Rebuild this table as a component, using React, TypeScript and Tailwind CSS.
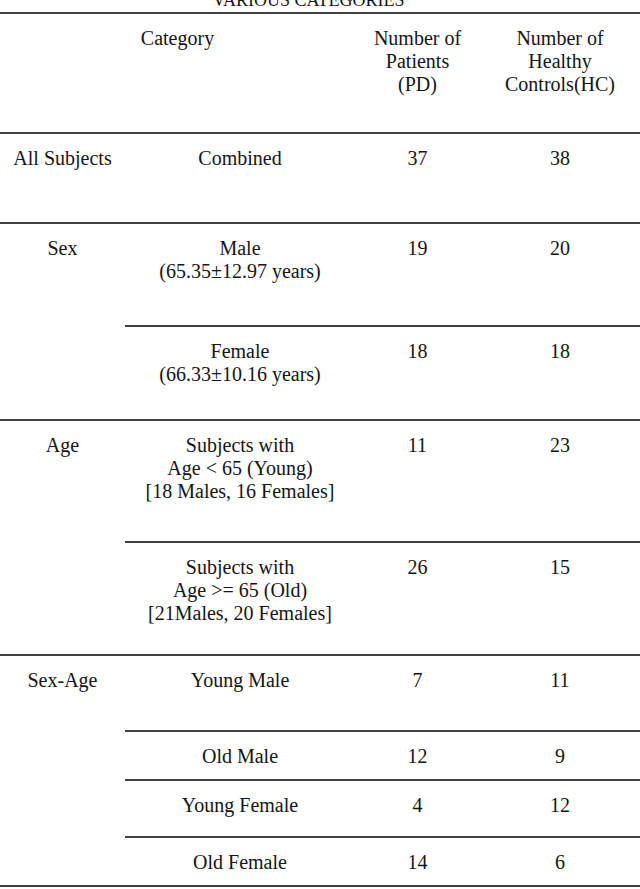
import React from "react";

type Sub = { label: string[]; pd: string; hc: string; h: string };
type Group = { name: string; subs: Sub[] };

const groups: Group[] = [
  { name: "All Subjects", subs: [{ label: ["Combined"], pd: "37", hc: "38", h: "h-[90px]" }] },
  {
    name: "Sex",
    subs: [
      { label: ["Male", "(65.35±12.97 years)"], pd: "19", hc: "20", h: "h-[103px]" },
      { label: ["Female", "(66.33±10.16 years)"], pd: "18", hc: "18", h: "h-[94px]" },
    ],
  },
  {
    name: "Age",
    subs: [
      { label: ["Subjects with", "Age < 65 (Young)", "[18 Males, 16 Females]"], pd: "11", hc: "23", h: "h-[122px]" },
      { label: ["Subjects with", "Age >= 65 (Old)", "[21Males, 20 Females]"], pd: "26", hc: "15", h: "h-[113px]" },
    ],
  },
  {
    name: "Sex-Age",
    subs: [
      { label: ["Young Male"], pd: "7", hc: "11", h: "h-[76px]" },
      { label: ["Old Male"], pd: "12", hc: "9", h: "h-[49px]" },
      { label: ["Young Female"], pd: "4", hc: "12", h: "h-[57px]" },
      { label: ["Old Female"], pd: "14", hc: "6", h: "h-[49px]" },
    ],
  },
];

export default function App() {
  return (
    <div
      className="w-[640px] h-[889px] bg-white text-[#151515] text-[20px] leading-[23px] overflow-hidden"
      style={{ fontFamily: '"Liberation Serif", "Times New Roman", serif' }}
    >
      <div className="h-[12px] overflow-hidden">
        <div className="mt-[-9px] text-[18px] leading-[18px] text-center pr-[23px]">VARIOUS CATEGORIES</div>
      </div>
      <div className="border-b-2 border-[#404040]">
        <div className="flex h-[120px] border-t-2 border-[#404040] pt-[13px]">
          <div className="w-[355px] text-center">Category</div>
          <div className="w-[125px] text-center">
            <div>Number of</div>
            <div>Patients</div>
            <div>(PD)</div>
          </div>
          <div className="flex-1 text-center">
            <div>Number of</div>
            <div>Healthy</div>
            <div>Controls(HC)</div>
          </div>
        </div>
        {groups.map((g) => (
          <div key={g.name} className="flex">
            <div className="w-[125px] border-t-2 border-[#404040] pt-[13px] text-center">{g.name}</div>
            <div className="flex-1 flex flex-col">
              {g.subs.map((s, i) => (
                <div key={i} className={`flex border-t-2 border-[#404040] pt-[13px] ${s.h}`}>
                  <div className="w-[230px] text-center">
                    {s.label.map((l, j) => (
                      <div key={j}>{l}</div>
                    ))}
                  </div>
                  <div className="w-[125px] text-center">{s.pd}</div>
                  <div className="flex-1 text-center">{s.hc}</div>
                </div>
              ))}
            </div>
          </div>
        ))}
      </div>
    </div>
  );
}
